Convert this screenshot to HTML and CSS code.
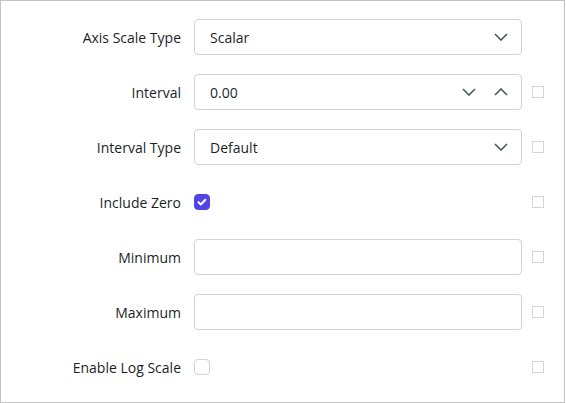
FILE: index.html
```html
<!DOCTYPE html>
<html lang="en">
<head>
    <meta charset="UTF-8">
    <meta name="viewport" content="width=device-width, initial-scale=1.0">
    <title>Axis Settings</title>
    <link rel="stylesheet" href="styles.css">
</head>
<body>
    <div class="panel">
        <!-- Axis Scale Type -->
        <label class="label">Axis Scale Type</label>
        <div class="field">
            <span class="value">Scalar</span>
            <svg class="chevron" viewBox="0 0 14 8"><path d="M1 1l6 6 6-6"/></svg>
        </div>
        <span></span>

        <!-- Interval -->
        <label class="label">Interval</label>
        <div class="field">
            <span class="value">0.00</span>
            <svg class="chevron spin-down" viewBox="0 0 14 8"><path d="M1 1l6 6 6-6"/></svg>
            <svg class="chevron" viewBox="0 0 14 8"><path d="M1 7l6-6 6 6"/></svg>
        </div>
        <span class="mark"></span>

        <!-- Interval Type -->
        <label class="label">Interval Type</label>
        <div class="field">
            <span class="value">Default</span>
            <svg class="chevron" viewBox="0 0 14 8"><path d="M1 1l6 6 6-6"/></svg>
        </div>
        <span class="mark"></span>

        <!-- Include Zero -->
        <label class="label">Include Zero</label>
        <div class="check-cell">
            <span class="check checked">
                <svg viewBox="0 0 16 16"><path d="M4.5 8.3l2.3 2.2 4.6-4.8"/></svg>
            </span>
        </div>
        <span class="mark"></span>

        <!-- Minimum -->
        <label class="label">Minimum</label>
        <div class="field"></div>
        <span class="mark"></span>

        <!-- Maximum -->
        <label class="label">Maximum</label>
        <div class="field"></div>
        <span class="mark"></span>

        <!-- Enable Log Scale -->
        <label class="label">Enable Log Scale</label>
        <div class="check-cell">
            <span class="check"></span>
        </div>
        <span class="mark"></span>
    </div>
</body>
</html>
```

FILE: styles.css
```css
/* Base Styles */
body, html {
    margin: 0;
    padding: 0;
    background: #fff;
    font-family: 'Open Sans', sans-serif;
    font-size: 14px;
    color: #1b1f2a;
}

/* Panel */
.panel {
    width: 565px;
    height: 403px;
    box-sizing: border-box;
    border: 1px solid #c3c3c3;
    padding-top: 18px;
    display: grid;
    grid-template-columns: 180px 328px 12px;
    grid-auto-rows: 36px;
    column-gap: 13px;
    row-gap: 19px;
    align-content: start;
}

.label {
    display: flex;
    align-items: center;
    justify-content: flex-end;
    white-space: nowrap;
}

/* Inputs */
.field {
    display: flex;
    align-items: center;
    box-sizing: border-box;
    border: 1px solid #d1d3da;
    border-radius: 4px;
    padding: 0 13px 0 15px;
}

.value {
    flex: 1;
}

.chevron {
    width: 14px;
    height: 8px;
    fill: none;
    stroke: #4b5563;
    stroke-width: 1.6;
}

.spin-down {
    margin-right: 18px;
}

/* Checkboxes */
.check-cell {
    display: flex;
    align-items: center;
}

.check {
    width: 16px;
    height: 16px;
    box-sizing: border-box;
    border: 1px solid #d1d3da;
    border-radius: 4px;
    display: flex;
}

.check.checked {
    background: #4f46e5;
    border-color: #4f46e5;
}

.check svg {
    width: 16px;
    height: 16px;
    margin: -1px;
    fill: none;
    stroke: #fff;
    stroke-width: 2;
    stroke-linecap: round;
    stroke-linejoin: round;
}

/* Reset markers */
.mark {
    align-self: center;
    margin-left: -3px;
    width: 12px;
    height: 12px;
    box-sizing: border-box;
    border: 1px solid #d4d4dc;
}
```
